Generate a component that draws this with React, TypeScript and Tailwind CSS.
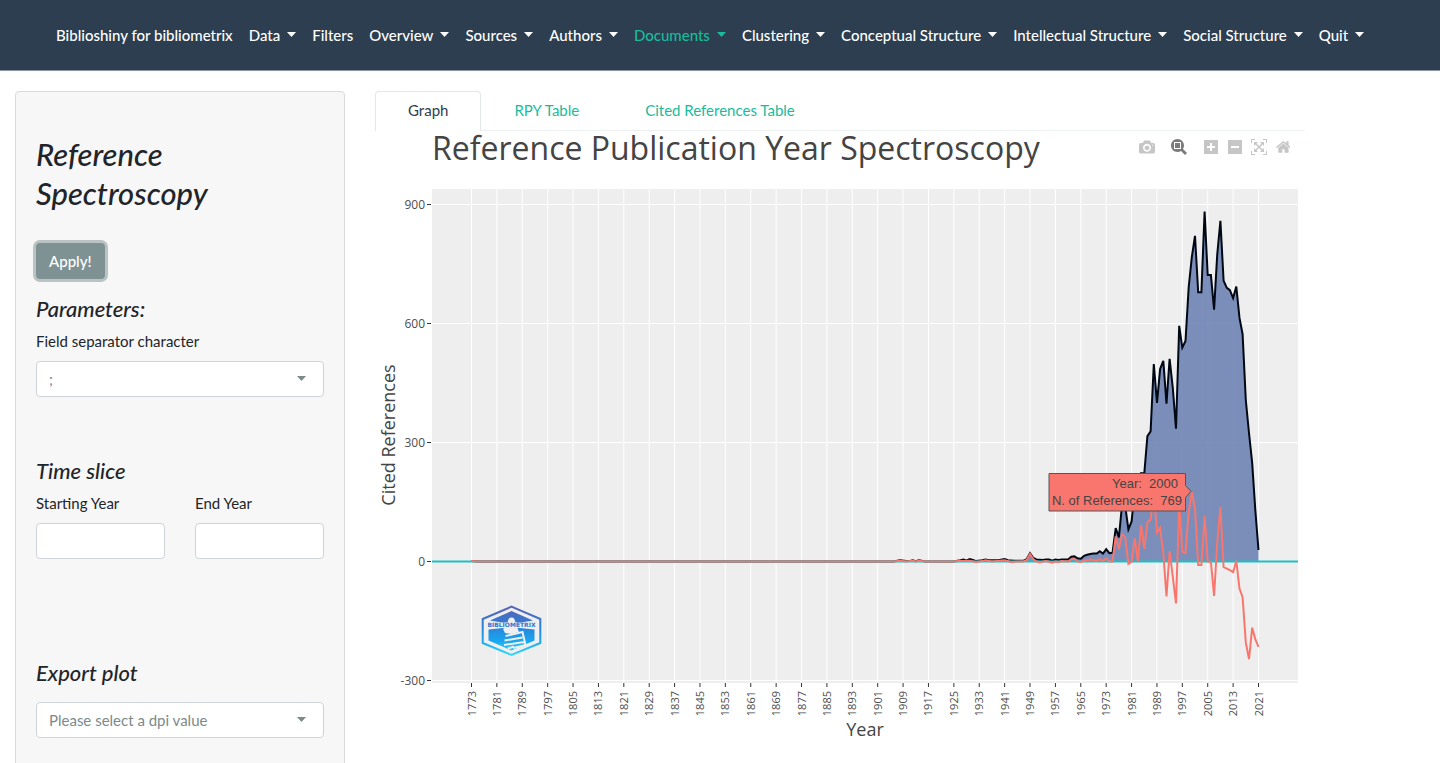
import { useState } from 'react';

const NAV_ITEMS = [
  { label: 'Data', menu: true },
  { label: 'Filters', menu: false },
  { label: 'Overview', menu: true },
  { label: 'Sources', menu: true },
  { label: 'Authors', menu: true },
  { label: 'Documents', menu: true },
  { label: 'Clustering', menu: true },
  { label: 'Conceptual Structure', menu: true },
  { label: 'Intellectual Structure', menu: true },
  { label: 'Social Structure', menu: true },
  { label: 'Quit', menu: true },
];

const TABS = ['Graph', 'RPY Table', 'Cited References Table'];

const MODEBAR = [
  {
    label: 'Download plot as a png',
    width: 1000,
    className: 'mr-2 text-[#c6c6c6]',
    path: 'm500 450c-83 0-150-67-150-150 0-83 67-150 150-150 83 0 150 67 150 150 0 83-67 150-150 150z m400 150h-120c-16 0-34 13-39 29l-31 93c-6 15-23 28-40 28h-340c-16 0-34-13-39-28l-31-94c-6-15-23-28-40-28h-120c-55 0-100-45-100-100v-450c0-55 45-100 100-100h800c55 0 100 45 100 100v450c0 55-45 100-100 100z m-400-550c-138 0-250 112-250 250 0 138 112 250 250 250 138 0 250-112 250-250 0-138-112-250-250-250z m365 380c-19 0-35 16-35 35 0 19 16 35 35 35 19 0 35-16 35-35 0-19-16-35-35-35z',
  },
  {
    label: 'Zoom',
    width: 1000,
    className: 'mr-2 text-[#7b7b7b]',
    path: 'm1000-25l-250 251c40 63 63 138 63 218 0 224-182 406-407 406-224 0-406-182-406-406s183-406 407-406c80 0 155 22 218 62l250-250 125 125z m-812 250l0 438 437 0 0-438-437 0z m62 375l313 0 0-312-313 0 0 312z',
  },
  {
    label: 'Zoom in',
    width: 875,
    className: 'text-[#c6c6c6]',
    path: 'm1 787l0-875 875 0 0 875-875 0z m687-500l-187 0 0-187-125 0 0 187-188 0 0 125 188 0 0 187 125 0 0-187 187 0 0-125z',
  },
  {
    label: 'Zoom out',
    width: 875,
    className: 'text-[#c6c6c6]',
    path: 'm0 788l0-876 875 0 0 876-875 0z m688-500l-500 0 0 125 500 0 0-125z',
  },
  {
    label: 'Autoscale',
    width: 1000,
    className: 'text-[#c6c6c6]',
    path: 'm250 850l-187 0-63 0 0-62 0-188 63 0 0 188 187 0 0 62z m688 0l-188 0 0-62 188 0 0-188 62 0 0 188 0 62-62 0z m-875-938l0 188-63 0 0-188 0-62 63 0 187 0 0 62-187 0z m875 188l0-188-188 0 0-62 188 0 62 0 0 62 0 188-62 0z m-125 188l-1 0-93-94-156 156 156 156 92-93 2 0 0 250-250 0 0-2 93-92-156-156-156 156 94 92 0 2-250 0 0-250 0 0 93 93 157-156-157-156-93 94 0 0 0-250 250 0 0 0-94 93 156 157 156-157-93-93 0 0 250 0 0 250z',
  },
  {
    label: 'Reset axes',
    width: 928,
    className: 'text-[#c6c6c6]',
    path: 'm786 296v-267q0-15-11-26t-25-10h-214v214h-143v-214h-214q-15 0-25 10t-11 26v267q0 1 0 2t0 2l321 264 321-264q1-1 1-4z m124 39l-34-41q-5-5-12-6h-2q-7 0-12 3l-386 322-386-322q-7-4-13-4-7 2-12 7l-35 41q-4 5-3 13t6 12l401 334q18 15 42 15t43-15l136-114v109q0 8 5 13t13 5h107q8 0 13-5t5-13v-227l122-102q5-5 6-12t-4-13z',
  },
];

// Number of cited references per year, [year, count]
const REFERENCES: [number, number][] = [
  [1773, 1], [1775, 0], [1906, 0], [1908, 3], [1910, 1], [1911, 1], [1912, 3], [1913, 1], [1914, 3], [1916, 0],
  [1925, 0], [1927, 3], [1928, 5], [1929, 2], [1930, 6], [1931, 4], [1932, 1], [1934, 3], [1935, 5], [1936, 3],
  [1939, 3], [1941, 6], [1942, 3], [1944, 2], [1947, 2], [1948, 6], [1949, 21], [1950, 9], [1951, 5], [1953, 4],
  [1954, 5], [1955, 5], [1956, 2], [1957, 5], [1958, 4], [1959, 5], [1961, 5], [1962, 12], [1963, 13], [1964, 8],
  [1965, 7], [1966, 14], [1967, 17], [1968, 19], [1969, 20], [1970, 20], [1971, 26], [1972, 20], [1973, 31],
  [1974, 21], [1975, 22], [1976, 84], [1977, 61], [1978, 142], [1979, 140], [1980, 81], [1981, 101], [1982, 180],
  [1983, 185], [1984, 223], [1985, 222], [1986, 316], [1987, 328], [1988, 498], [1989, 400], [1990, 485],
  [1991, 506], [1992, 398], [1993, 511], [1994, 438], [1995, 335], [1996, 594], [1997, 539], [1998, 556],
  [1999, 692], [2000, 769], [2001, 821], [2002, 679], [2003, 679], [2004, 882], [2005, 722], [2006, 722],
  [2007, 635], [2008, 773], [2009, 859], [2010, 708], [2011, 690], [2012, 684], [2013, 664], [2014, 693],
  [2015, 614], [2016, 573], [2017, 407], [2018, 324], [2019, 248], [2020, 130], [2021, 29],
];

// Deviation from the five year median
const DEVIATION: [number, number][] = [
  [1773, 1], [1775, 0], [1906, 0], [1908, 2], [1910, 0], [1912, 2], [1913, 0], [1914, 2], [1916, 0], [1925, 0],
  [1927, 2], [1928, 1], [1929, 1], [1930, 2], [1932, -1], [1934, 1], [1935, 3], [1937, 0], [1941, 3], [1943, -1],
  [1945, 0], [1947, 0], [1948, 4], [1949, 19], [1950, 6], [1951, 0], [1952, -2], [1954, 1], [1956, -3], [1957, 0],
  [1958, -1], [1959, 1], [1961, 0], [1962, 6], [1963, 7], [1964, 0], [1965, -1], [1966, 2], [1968, 5], [1970, 2],
  [1971, 6], [1972, 1], [1973, 8], [1974, 0], [1975, 0], [1976, 63], [1977, 31], [1978, 69], [1979, 61],
  [1980, -6], [1981, -1], [1982, 58], [1983, 1], [1984, 92], [1985, 32], [1986, 98], [1987, 106], [1988, 175],
  [1989, 73], [1990, 85], [1991, 21], [1992, -88], [1993, 26], [1994, -38], [1995, -106], [1996, 145], [1997, 25],
  [1998, 21], [1999, 125], [2000, 175], [2001, 133], [2002, -9], [2003, -9], [2004, 115], [2005, 0], [2006, -1],
  [2007, -87], [2008, 46], [2009, 138], [2010, -14], [2011, -18], [2012, -22], [2013, -27], [2014, 2], [2015, -68],
  [2016, -90], [2017, -204], [2018, -246], [2019, -167], [2020, -196], [2021, -215],
];

const PLOT = { left: 57, right: 923, top: 58, bottom: 552 };
const X_TICKS = Array.from({ length: 32 }, (_, i) => 1773 + i * 8);
const Y_TICKS = [900, 600, 300, 0, -300];

const scaleX = (year: number) => 96.5 + ((year - 1773) * 787) / 248;
const scaleY = (value: number) => 430.5 - (value * 119) / 300;
const toPoints = (data: [number, number][]) =>
  data.map(([year, value]) => `${scaleX(year).toFixed(1)},${scaleY(value).toFixed(1)}`).join(' ');

function Caret({ className = '' }: { className?: string }) {
  return (
    <svg viewBox="0 0 9 5" className={`h-[5px] w-[9px] fill-current ${className}`} aria-hidden="true">
      <path d="M0 0h9L4.500 5z" />
    </svg>
  );
}

function Navbar() {
  return (
    <nav className="flex h-[71px] shrink-0 items-center gap-4 border-b border-[#8b96a3] bg-[#2c3e50] px-14 text-[15px] font-medium whitespace-nowrap text-white">
      <a href="#home">Biblioshiny for bibliometrix</a>
      {NAV_ITEMS.map((item) => (
        <a
          key={item.label}
          href={`#${item.label}`}
          className={item.label === 'Documents' ? 'flex items-center text-[#18bc9c]' : 'flex items-center'}
        >
          {item.label}
          {item.menu && <Caret className="mb-0.5 ml-[7px]" />}
        </a>
      ))}
    </nav>
  );
}

interface SelectFieldProps {
  id: string;
  label: string;
  options: string[];
}

function SelectField({ id, label, options }: SelectFieldProps) {
  return (
    <div className="relative">
      <select
        id={id}
        aria-label={label}
        className="block h-9 w-full appearance-none rounded border border-[#ced4da] bg-white px-3 text-[15px] text-[#7b8a8b]"
      >
        {options.map((option) => (
          <option key={option}>{option}</option>
        ))}
      </select>
      <Caret className="pointer-events-none absolute top-[15px] right-[18px] text-[#7b8a8b]" />
    </div>
  );
}

function YearField({ id, label }: { id: string; label: string }) {
  return (
    <div className="min-w-0 flex-1">
      <label htmlFor={id} className="mb-2 block leading-6">
        {label}
      </label>
      <input id={id} type="text" className="block h-9 w-full rounded border border-[#ced4da] bg-white px-3" />
    </div>
  );
}

function Sidebar() {
  return (
    <form
      onSubmit={(e) => e.preventDefault()}
      className="min-h-screen rounded border border-[#d8dadb] bg-[#f7f7f7] px-5 pt-[43px] pb-5 text-[15px] text-[#212529]"
    >
      <h3 className="text-[31px] leading-[39px] font-medium italic">
        Reference
        <br />
        Spectroscopy
      </h3>
      <button
        type="submit"
        className="mt-[30px] block h-9 rounded bg-[#7f9293] px-[13px] font-medium text-white ring-3 ring-[#bac2c3]"
      >
        Apply!
      </button>

      <h4 className="mt-4 text-[22px] leading-7 font-medium italic">Parameters:</h4>
      <label htmlFor="separator" className="mt-1.5 mb-2 block leading-6">
        Field separator character
      </label>
      <SelectField id="separator" label="Field separator character" options={[';', '.', ',']} />

      <h4 className="mt-15 text-[22px] leading-7 font-medium italic">Time slice</h4>
      <div className="mt-1.5 flex gap-[30px]">
        <YearField id="start-year" label="Starting Year" />
        <YearField id="end-year" label="End Year" />
      </div>

      <h4 className="mt-25 text-[22px] leading-7 font-medium italic">Export plot</h4>
      <div className="mt-[15px]">
        <SelectField id="dpi" label="Dpi value" options={['Please select a dpi value', 'dpi = 75', 'dpi = 300']} />
      </div>
    </form>
  );
}

function ChartLogo() {
  return (
    <g>
      <defs>
        <linearGradient id="logo" gradientUnits="userSpaceOnUse" x1="0" y1="475" x2="0" y2="524">
          <stop offset="0" stopColor="#5a62b4" />
          <stop offset="0.4" stopColor="#2f7ed6" />
          <stop offset="0.7" stopColor="#18a5ee" />
          <stop offset="1" stopColor="#35d8fb" />
        </linearGradient>
      </defs>
      <path
        d="M136.500 475.700L165.300 488v24L136.500 524L107.700 512v-24z"
        fill="#efefef"
        stroke="url(#logo)"
        strokeWidth="2"
      />
      <path d="M136.500 480L158 489.500L146 491.500H127L115 489.500z" fill="url(#logo)" />
      <path d="M113.500 498.500L128 497H145L159.500 498.500V509.500L136.500 519.500L113.500 509.500z" fill="url(#logo)" />
      {/* Lighthouse lamp and the stack of books */}
      <path
        d="M136.500 486.500c2.500 0 3.500 2 3.500 4l2 1.500v4l2 5-7 2-7-1-2-4 2-1.500v-4l3-2c0-2 1-4 3.500-4z"
        fill="#efefef"
      />
      <path
        d="M130.500 505l17-4 3 13-12 3M129.500 509.500l18-3M129 514l20-3M133 517.500l6-2"
        fill="none"
        stroke="#efefef"
        strokeWidth="2"
      />
      <text
        x="136.500"
        y="496"
        textAnchor="middle"
        fontSize="6"
        fontWeight="700"
        fill="#2f74cf"
        className="font-['DejaVu_Sans',sans-serif]"
      >
        BIBLIOMETRIX
      </text>
    </g>
  );
}

function SpectroscopyChart() {
  const references = toPoints(REFERENCES);
  const area = `${scaleX(1773)},${scaleY(0)} ${references} ${scaleX(2021)},${scaleY(0)}`;

  return (
    <svg
      viewBox="0 0 930 632"
      className="block w-full overflow-visible font-['Open_Sans',sans-serif]"
      role="img"
      aria-label="Reference Publication Year Spectroscopy"
    >
      <text x="57" y="29" fontSize="32" fill="#444444">
        Reference Publication Year Spectroscopy
      </text>

      {/* Panel and grid */}
      <rect x={PLOT.left} y={PLOT.top} width={866} height={494} fill="#eeeeee" />
      {X_TICKS.map((year) => (
        <g key={year}>
          <line x1={scaleX(year)} x2={scaleX(year)} y1={PLOT.top} y2={PLOT.bottom} stroke="#ffffff" />
          <line x1={scaleX(year)} x2={scaleX(year)} y1={552} y2={556} stroke="#333333" />
          <text
            transform={`translate(${scaleX(year) + 4} 560) rotate(-90)`}
            textAnchor="end"
            fontSize="11"
            fill="#4d4d4d"
          >
            {year}
          </text>
        </g>
      ))}
      {Y_TICKS.map((value) => (
        <g key={value}>
          <line x1={PLOT.left} x2={PLOT.right} y1={scaleY(value)} y2={scaleY(value)} stroke="#ffffff" />
          <line x1={52} x2={56} y1={scaleY(value)} y2={scaleY(value)} stroke="#333333" />
          <text x="50" y={scaleY(value) + 4} textAnchor="end" fontSize="12" fill="#4d4d4d">
            {value}
          </text>
        </g>
      ))}

      <ChartLogo />

      {/* Series */}
      <polygon points={area} fill="#6a80b2" fillOpacity="0.87" />
      <polyline points={references} fill="none" stroke="#000814" strokeWidth="2" />
      <line x1={PLOT.left} x2={PLOT.right} y1={scaleY(0)} y2={scaleY(0)} stroke="#1fbfc4" strokeWidth="2" />
      <polyline points={toPoints(DEVIATION)} fill="none" stroke="#f8766d" strokeWidth="2" />

      {/* Axis titles */}
      <text transform="translate(20 304) rotate(-90)" textAnchor="middle" fontSize="18" fill="#444444">
        Cited References
      </text>
      <text x="490" y="605" textAnchor="middle" fontSize="18" fill="#444444">
        Year
      </text>

      {/* Hover label */}
      <path d="M816 360.500l-5.500-6V342.500H674v37.500H810.500V366.500z" fill="#f8766d" stroke="#555555" />
      <g fontSize="13" fill="#444444" className="font-['Liberation_Sans',sans-serif]">
        <text x="803" y="357" textAnchor="end">{'Year:\u00a0\u00a02000'}</text>
        <text x="807" y="374" textAnchor="end">{'N. of References:\u00a0\u00a0769'}</text>
      </g>
    </svg>
  );
}

export default function App() {
  const [activeTab, setActiveTab] = useState('Graph');

  return (
    <div className="flex h-screen flex-col overflow-hidden bg-white font-[Lato,sans-serif]">
      <Navbar />
      <div className="flex pt-5">
        <aside className="w-1/4 px-[15px]">
          <Sidebar />
        </aside>
        <main className="w-2/3 px-[15px]">
          <div role="tablist" className="flex border-b border-[#ecf0f1] text-[15px]">
            {TABS.map((tab) => (
              <button
                key={tab}
                type="button"
                role="tab"
                aria-selected={tab === activeTab}
                onClick={() => setActiveTab(tab)}
                className={
                  tab === activeTab
                    ? '-mb-px h-10 rounded-t border border-b-0 border-[#e3e7e8] bg-white px-8 pb-0.5 text-[#2c3e50]'
                    : '-mb-px h-10 border border-b-0 border-transparent px-8 pb-0.5 text-[#18bc9c]'
                }
              >
                {tab}
              </button>
            ))}
          </div>
          <div className="relative">
            <SpectroscopyChart />
            <div className="absolute top-2 right-[10px] flex">
              {MODEBAR.map((tool) => (
                <button
                  key={tool.label}
                  type="button"
                  aria-label={tool.label}
                  className={`flex w-6 justify-center ${tool.className}`}
                >
                  <svg viewBox={`0 0 ${tool.width} 1000`} className="h-4 fill-current">
                    <path d={tool.path} transform="matrix(1 0 0 -1 0 850)" />
                  </svg>
                </button>
              ))}
            </div>
          </div>
        </main>
      </div>
    </div>
  );
}
